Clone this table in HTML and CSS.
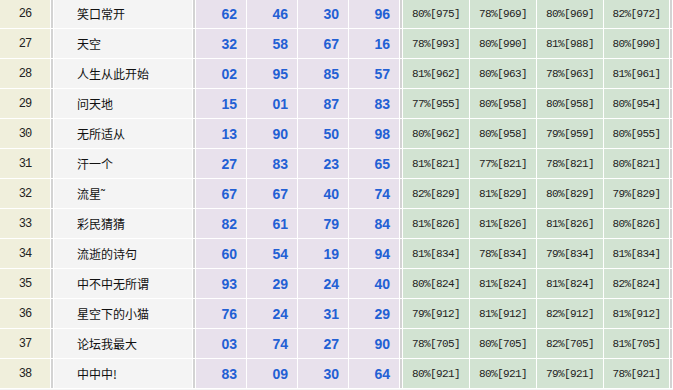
FILE: index.html
```html
<!DOCTYPE html>
<html>
<head>
<meta charset="utf-8">
<link rel="stylesheet" href="styles.css">
</head>
<body>
<table class="rank-table">
<colgroup>
<col class="c-rank"><col class="c-sep"><col class="c-name"><col class="c-sep">
<col class="c-num"><col class="c-num"><col class="c-num"><col class="c-num"><col class="c-sep">
<col class="c-pct"><col class="c-pct"><col class="c-pct"><col class="c-pct2"><col class="c-sep">
</colgroup>
<tbody id="rows"></tbody>
</table>
<script>
var data = [
["26","笑口常开",["62","46","30","96"],["80%[975]","78%[969]","80%[969]","82%[972]"]],
["27","天空",["32","58","67","16"],["78%[993]","80%[990]","81%[988]","80%[990]"]],
["28","人生从此开始",["02","95","85","57"],["81%[962]","80%[963]","78%[963]","81%[961]"]],
["29","问天地",["15","01","87","83"],["77%[955]","80%[958]","80%[958]","80%[954]"]],
["30","无所适从",["13","90","50","98"],["80%[962]","80%[958]","79%[959]","80%[955]"]],
["31","汗一个",["27","83","23","65"],["81%[821]","77%[821]","78%[821]","80%[821]"]],
["32","流星˜",["67","67","40","74"],["82%[829]","81%[829]","80%[829]","79%[829]"]],
["33","彩民猜猜",["82","61","79","84"],["81%[826]","81%[826]","81%[826]","80%[826]"]],
["34","流逝的诗句",["60","54","19","94"],["81%[834]","78%[834]","79%[834]","81%[834]"]],
["35","中不中无所谓",["93","29","24","40"],["80%[824]","81%[824]","81%[824]","82%[824]"]],
["36","星空下的小猫",["76","24","31","29"],["79%[912]","81%[912]","82%[912]","81%[912]"]],
["37","论坛我最大",["03","74","27","90"],["78%[705]","80%[705]","82%[705]","81%[705]"]],
["38","中中中!",["83","09","30","64"],["80%[921]","80%[921]","79%[921]","78%[921]"]]
];
var html = "";
data.forEach(function(r){
  html += '<tr><td class="rank">'+r[0]+'</td><td class="sep"></td><td class="name">'+r[1]+'</td><td class="sep"></td>';
  r[2].forEach(function(n){ html += '<td class="num">'+n+'</td>'; });
  html += '<td class="sep"></td>';
  r[3].forEach(function(p){ html += '<td class="pct">'+p+'</td>'; });
  html += '<td class="sep"></td></tr>';
});
document.getElementById("rows").innerHTML = html;
</script>
</body>
</html>
```

FILE: styles.css
```css
html, body {
  margin: 0;
  padding: 0;
  background: #f4f4f4;
  overflow: hidden;
}
.rank-table {
  border-collapse: separate;
  border-spacing: 1px;
  background: #ffffff;
  table-layout: fixed;
  width: 674px;
  margin: -2px 0 0 -1px;
}
.c-rank { width: 50px; }
.c-sep { width: 2px; }
.c-name { width: 138px; }
.c-num { width: 50px; }
.c-pct { width: 66px; }
.c-pct2 { width: 65px; }
td {
  height: 29px;
  padding: 0;
  vertical-align: middle;
}
.sep {
  background: #d3d3d3;
}
.rank {
  background: #f0efdc;
  text-align: center;
  font-family: "Liberation Mono", monospace;
  font-size: 12px;
  letter-spacing: -1px;
  color: #222;
}
.name {
  background: #f4f4f4;
  padding-left: 23px;
  font-family: "Noto Sans CJK SC", sans-serif;
  font-size: 12px;
  color: #111;
  white-space: nowrap;
}
.num {
  background: #e8e1ec;
  text-align: right;
  padding-right: 9px;
  font-family: "Liberation Sans", sans-serif;
  font-weight: bold;
  font-size: 14px;
  color: #2360d4;
}
.pct {
  background: #d2e3d2;
  text-align: center;
  font-family: "Liberation Mono", monospace;
  font-size: 11px;
  letter-spacing: -0.6px;
  color: #222;
  white-space: nowrap;
}
```
